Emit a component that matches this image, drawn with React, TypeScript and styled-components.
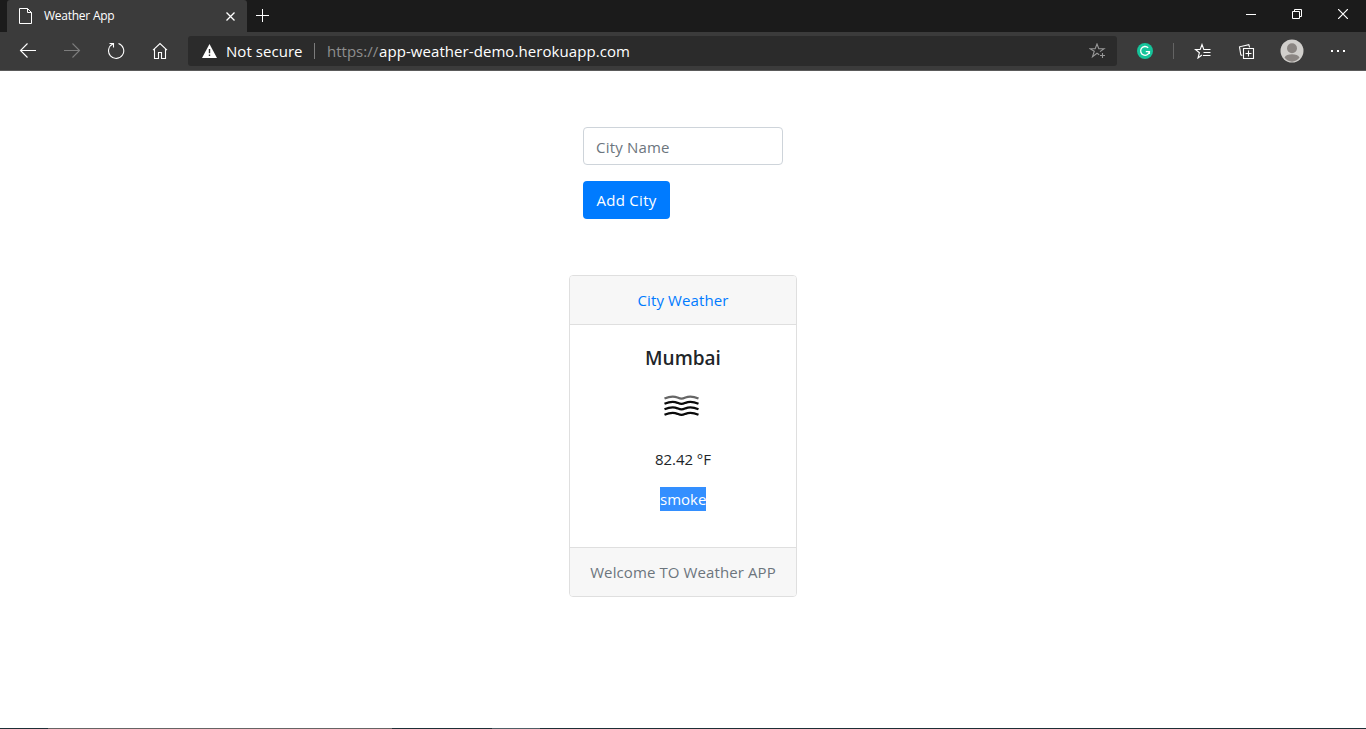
import React from "react";
import styled, { createGlobalStyle } from "styled-components";

const GlobalStyle = createGlobalStyle`
  * { box-sizing: border-box; }
  html, body { margin: 0; padding: 0; background: #fff; overflow: hidden; }
  body { font-family: "Open Sans", "Noto Sans", sans-serif; font-size: 15px; line-height: 24px; color: #212529; }
`;

const Window = styled.div`
  display: flex;
  flex-direction: column;
  width: 100%;
  height: 729px;
  overflow: hidden;
`;

const TabBar = styled.header`
  display: flex;
  flex: none;
  height: 32px;
  padding-left: 7px;
  background: #1b1b1b;
  color: #fff;
`;

const Tab = styled.div`
  display: flex;
  align-items: center;
  width: 240px;
  height: 32px;
  padding: 0 11px 0 11px;
  background: #3b3b3b;
  border-radius: 3px 3px 0 0;
`;

const TabTitle = styled.span`
  flex: 1;
  margin-left: 12px;
  font-size: 12px;
  letter-spacing: -0.25px;
  line-height: 32px;
  white-space: nowrap;
`;

const NewTab = styled.div`
  display: flex;
  align-items: center;
  height: 31px;
  margin-left: 9px;
`;

const WindowControls = styled.div`
  display: flex;
  margin-left: auto;
  height: 28px;
`;

const WindowButton = styled.div`
  display: flex;
  align-items: center;
  justify-content: center;
  width: 46px;
`;

const Toolbar = styled.nav`
  display: flex;
  flex: none;
  align-items: center;
  height: 39px;
  background: #3b3b3b;
  border-bottom: 1px solid #5a5a5a;
  color: #fff;
`;

const NavButton = styled.div<{ $dim?: boolean }>`
  display: flex;
  align-items: center;
  justify-content: center;
  width: 44px;
  height: 38px;
  color: ${(p) => (p.$dim ? "#7d7d7d" : "#fff")};
`;

const NavGroup = styled.div`
  display: flex;
  padding-left: 6px;
  width: 188px;
`;

const AddressBar = styled.div`
  display: flex;
  align-items: center;
  width: 929px;
  height: 30px;
  padding: 0 11px 0 14px;
  background: #2b2b2b;
  border-radius: 3px;
`;

const AddressText = styled.span<{ $dim?: boolean; $spacing: number }>`
  font-size: 15px;
  letter-spacing: ${(p) => p.$spacing}px;
  line-height: 30px;
  white-space: nowrap;
  color: ${(p) => (p.$dim ? "#8e8e8e" : "#fff")};
`;

const SecurityLabel = styled.div`
  display: flex;
  flex: none;
  align-items: center;
  width: 112px;
  gap: 9px;
`;

const Divider = styled.span<{ $height: number; $color: string }>`
  flex: none;
  width: 1px;
  height: ${(p) => p.$height}px;
  background: ${(p) => p.$color};
`;

const Url = styled.div`
  display: flex;
  flex: 1;
  margin-left: 12px;
`;

const Scheme = styled.div`
  width: 52px;
`;

const Actions = styled.div`
  display: flex;
  flex: 1;
  align-items: center;
`;

const Action = styled.div<{ $width: number }>`
  display: flex;
  align-items: center;
  justify-content: center;
  width: ${(p) => p.$width}px;
`;

const Page = styled.main`
  display: flex;
  flex: 1;
  flex-direction: column;
  align-items: center;
  padding-top: 56px;
`;

const CityForm = styled.form`
  display: flex;
  flex-direction: column;
  align-items: flex-start;
  gap: 16px;
  width: 200px;
`;

const CityInput = styled.input`
  width: 200px;
  height: 38px;
  padding: 2px 12px 0;
  border: 1px solid #ced4da;
  border-radius: 4px;
  background: #fff;
  font: inherit;
  letter-spacing: 0.2px;
  outline: none;
  &::placeholder { color: #6c757d; opacity: 1; }
`;

const AddButton = styled.button`
  width: 87px;
  height: 38px;
  padding: 0 0 1px;
  border: 0;
  border-radius: 4px;
  background: #007bff;
  color: #fff;
  font: inherit;
  white-space: nowrap;
`;

const Card = styled.section`
  display: flex;
  flex-direction: column;
  width: 228px;
  height: 322px;
  margin-top: 56px;
  border: 1px solid #dfdfdf;
  border-radius: 4px;
  overflow: hidden;
  text-align: center;
`;

const CardHeader = styled.div`
  height: 49px;
  padding-top: 12px;
  background: #f7f7f7;
  border-bottom: 1px solid #dfdfdf;
  color: #007bff;
`;

const CardBody = styled.div`
  display: flex;
  flex: 1;
  flex-direction: column;
  align-items: center;
`;

const CardFooter = styled.div`
  height: 49px;
  padding-top: 12px;
  background: #f7f7f7;
  border-top: 1px solid #dfdfdf;
  color: #6c757d;
`;

const City = styled.h5`
  margin: 21px 0 0;
  font-size: 19px;
  font-weight: 600;
  line-height: 24px;
`;

const WeatherIcon = styled.div`
  display: flex;
  align-items: center;
  justify-content: center;
  height: 50px;
  width: 50px;
  margin: 11px 3px 0 0;
`;

const Temperature = styled.p`
  margin: 16px 0 0;
`;

const Condition = styled.p`
  width: 46px;
  height: 24px;
  margin: 16px 0 0;
  background: #338fff;
  color: #fff;
`;

const Label = styled.span<{ $spacing: number }>`
  letter-spacing: ${(p) => p.$spacing}px;
  white-space: nowrap;
`;

const Taskbar = styled.footer`
  display: flex;
  flex: none;
  height: 1px;
  background: #1d2f36;
`;

const TaskbarPart = styled.span<{ $width: number; $color: string }>`
  width: ${(p) => p.$width}px;
  background: ${(p) => p.$color};
`;

const PageIcon = () => (
  <svg width="14" height="16" viewBox="0 0 14 16" fill="none" stroke="#fff">
    <path d="M1.5.5h8l4 4v11h-12zM9.5.5v4h4" />
  </svg>
);

const BackIcon = () => (
  <svg width="18" height="16" viewBox="0 0 18 16" fill="none" stroke="currentColor" strokeWidth="1.1">
    <path d="M17 7.5H1.5M8.5.5l-7 7 7 7" />
  </svg>
);

const ForwardIcon = () => (
  <svg width="18" height="16" viewBox="0 0 18 16" fill="none" stroke="currentColor" strokeWidth="1.1">
    <path d="M1 7.5h15.5M9.5.5l7 7-7 7" />
  </svg>
);

const ReloadIcon = () => (
  <svg width="18" height="18" viewBox="0 0 18 18" fill="none" stroke="currentColor" strokeWidth="1.1">
    <path d="M11.5 1.6A7.6 7.6 0 1 1 5.8 2M2.5 1.5h4v4" />
  </svg>
);

const HomeIcon = () => (
  <svg width="16" height="18" viewBox="0 0 16 18" fill="none" stroke="currentColor" strokeWidth="1.1">
    <path d="M1 8.2 8 1.5l7 6.7M2.5 7v9.5h4v-6h3v6h4V7" />
  </svg>
);

const WarningIcon = () => (
  <svg width="15" height="14" viewBox="0 0 15 14">
    <path d="M7.5 0 15 14H0z" fill="#fff" />
    <path d="M7.5 5v4.2M7.5 10.4v1.6" stroke="#2b2b2b" strokeWidth="1.4" />
  </svg>
);

const FavoriteIcon = () => (
  <svg width="17" height="17" viewBox="0 0 17 17" fill="none" stroke="#989898" strokeWidth="1.1">
    <path d="M10.2 11.8 8 10.3l-4.5 3.4 1.8-5.5L1 5.8h5.2L8 1l1.8 4.8H15L11 8.6M13.5 10v5M11 12.5h5" />
  </svg>
);

const GrammarlyIcon = () => (
  <svg width="16" height="16" viewBox="0 0 16 16" fill="none">
    <circle cx="8" cy="8" r="8" fill="#15c39a" />
    <path d="M11.2 4.8A4.4 4.4 0 1 0 12.4 8.7H8.8M12.4 8.7v2.4" stroke="#fff" strokeWidth="1.3" />
  </svg>
);

const FavoritesIcon = () => (
  <svg width="17" height="16" viewBox="0 0 17 16" fill="none" stroke="#fff" strokeWidth="1.1">
    <path d="M8 12 4 15l1.4-5.3L1.500 6.500h4.700L8 1.500l1.800 5H16.500M9.500 9.500h7M9 12.500h7.500" />
  </svg>
);

const CollectionsIcon = () => (
  <svg width="18" height="17" viewBox="0 0 18 17" fill="none" stroke="#fff" strokeWidth="1.1">
    <path d="M5.5 5.5h10v10h-10zM10.5 7.5v6M7.5 10.5h6M4.3 12.5 2.8 11.800 1.500 3.800 10.800 1.700l.8 2.600" />
  </svg>
);

const ProfileIcon = () => (
  <svg width="24" height="24" viewBox="0 0 24 24">
    <circle cx="12" cy="12" r="11.5" fill="#d1cfcc" />
    <circle cx="12" cy="9.3" r="5" fill="#8b8683" />
    <path d="M4.5 18.5c1-2.5 4-3.3 7.5-3.3s6.5.8 7.5 3.3A11 11 0 0 1 12 22.7 11 11 0 0 1 4.5 18.500z" fill="#8b8683" />
  </svg>
);

const MoreIcon = () => (
  <svg width="16" height="2" viewBox="0 0 16 2" fill="#fff">
    <path d="M1 0h2v2H1zM7 0h2v2H7zM13 0h2v2h-2z" />
  </svg>
);

const SmokeIcon = () => (
  <svg width="36" height="24" viewBox="0 0 36 24" fill="none" stroke="#0a0a0a" strokeWidth="2.3">
    <path d="M.5 4.5C6.5 2 9.5 2 13.5 3.5C17 5 18 5 21.5 3.5C25.5 2 28.5 2 34.5 4.5" stroke="#666" />
    {[5.3, 10.8, 16.3].map((y) => (
      <path key={y} transform={`translate(0 ${y})`} d="M.5 4.5C6.5 2 9.5 2 13.5 3.5C17 5 18 5 21.5 3.5C25.5 2 28.5 2 34.5 4.5" />
    ))}
  </svg>
);

export default function App() {
  return (
    <>
      <GlobalStyle />
      <Window>
        <TabBar>
          <Tab>
            <PageIcon />
            <TabTitle>Weather App</TabTitle>
            <svg width="12" height="12" viewBox="0 0 12 12" stroke="#fff" strokeWidth="1.3">
              <path d="m2.5 2.5 8 8m0-8-8 8" />
            </svg>
          </Tab>
          <NewTab>
            <svg width="13" height="13" viewBox="0 0 13 13" stroke="#fff">
              <path d="M6.5 0v13M0 6.5h13" />
            </svg>
          </NewTab>
          <WindowControls>
            <WindowButton>
              <svg width="10" height="10" viewBox="0 0 10 10" stroke="#fff"><path d="M0 5.5h10" /></svg>
            </WindowButton>
            <WindowButton>
              <svg width="10" height="10" viewBox="0 0 10 10" stroke="#fff" fill="none">
                <path d="M.5 2.5h7v7h-7zM2.5 2.5v-2h7v7h-2" />
              </svg>
            </WindowButton>
            <WindowButton>
              <svg width="10" height="10" viewBox="0 0 10 10" stroke="#fff" strokeWidth="1.2"><path d="m0 0 10 10M10 0 0 10" /></svg>
            </WindowButton>
          </WindowControls>
        </TabBar>
        <Toolbar>
          <NavGroup>
            <NavButton><BackIcon /></NavButton>
            <NavButton $dim><ForwardIcon /></NavButton>
            <NavButton><ReloadIcon /></NavButton>
            <NavButton><HomeIcon /></NavButton>
          </NavGroup>
          <AddressBar>
            <SecurityLabel>
              <WarningIcon />
              <AddressText $spacing={0.05}>Not secure</AddressText>
            </SecurityLabel>
            <Divider $height={16} $color="#7c7c7c" />
            <Url>
              <Scheme><AddressText $dim $spacing={0}>https://</AddressText></Scheme>
              <AddressText $spacing={0.07}>app-weather-demo.herokuapp.com</AddressText>
            </Url>
            <FavoriteIcon />
          </AddressBar>
          <Actions>
            <Action $width={56}><GrammarlyIcon /></Action>
            <Divider $height={16} $color="#646464" />
            <Action $width={57}><FavoritesIcon /></Action>
            <Action $width={32}><CollectionsIcon /></Action>
            <Action $width={58}><ProfileIcon /></Action>
            <Action $width={34}><MoreIcon /></Action>
          </Actions>
        </Toolbar>
        <Page>
          <CityForm>
            <CityInput placeholder="City Name" />
            <AddButton type="button"><Label $spacing={0.3}>Add City</Label></AddButton>
          </CityForm>
          <Card>
            <CardHeader><Label $spacing={0.1}>City Weather</Label></CardHeader>
            <CardBody>
              <City>Mumbai</City>
              <WeatherIcon><SmokeIcon /></WeatherIcon>
              <Temperature><Label $spacing={-0.05}>82.42 °F</Label></Temperature>
              <Condition><Label $spacing={0}>smoke</Label></Condition>
            </CardBody>
            <CardFooter><Label $spacing={0.1}>Welcome TO Weather APP</Label></CardFooter>
          </Card>
        </Page>
        <Taskbar>
          <TaskbarPart $width={48} $color="#1d2f36" />
          <TaskbarPart $width={344} $color="#666464" />
          <TaskbarPart $width={100} $color="#1d2f36" />
          <TaskbarPart $width={48} $color="#4f5f66" />
        </Taskbar>
      </Window>
    </>
  );
}
